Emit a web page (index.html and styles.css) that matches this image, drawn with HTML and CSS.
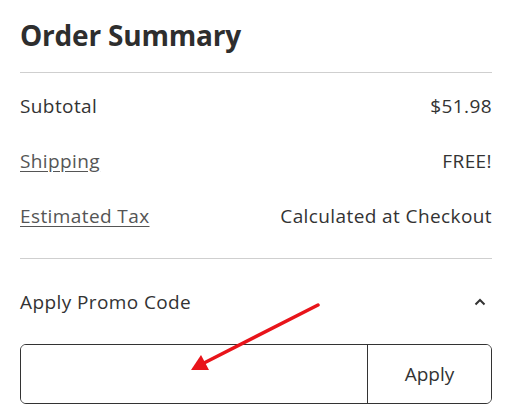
FILE: index.html
```html
<!DOCTYPE html>
<html lang="en">
<head>
    <meta charset="UTF-8">
    <meta name="viewport" content="width=device-width, initial-scale=1.0">
    <title>Order Summary</title>
    <link rel="stylesheet" href="styles.css">
</head>
<body>
  <div class="summary">
    <h1 class="title">Order Summary</h1>

    <div class="rows">
      <div class="row">
        <span>Subtotal</span>
        <span>$51.98</span>
      </div>
      <div class="row">
        <a href="#" class="link">Shipping</a>
        <span>FREE!</span>
      </div>
      <div class="row">
        <a href="#" class="link">Estimated Tax</a>
        <span>Calculated at Checkout</span>
      </div>
    </div>

    <div class="promo">
      <div class="promo-head">
        <span>Apply Promo Code</span>
        <svg class="chevron" width="12" height="8" viewBox="0 0 12 8">
          <path d="M1.5 6.5 L6 2 L10.5 6.5" fill="none" stroke="#333" stroke-width="2"/>
        </svg>
      </div>
      <div class="promo-form">
        <input type="text" class="promo-input" aria-label="Promo code">
        <button class="promo-btn">Apply</button>
      </div>
    </div>
  </div>

  <svg class="arrow" width="516" height="415" viewBox="0 0 516 415">
    <line x1="318" y1="305" x2="204" y2="363" stroke="#e8141a" stroke-width="3.5" stroke-linecap="round"/>
    <polygon points="191,370 201,355 209,370" fill="#e8141a"/>
  </svg>
</body>
</html>
```

FILE: styles.css
```css
body {
margin: 0;
font-family: 'Open Sans', 'Liberation Sans', sans-serif;
color: #333;
background: #fff;
}

.summary {
width: 472px;
padding-left: 20px;
}

.title {
margin: 0;
padding: 17px 0 19px;
font-size: 28px;
line-height: 36px;
font-weight: 700;
letter-spacing: -0.2px;
color: #2e2e2e;
border-bottom: 1px solid #cfcfcf;
}

.rows {
display: flex;
flex-direction: column;
gap: 31px;
padding: 21px 0 30px;
border-bottom: 1px solid #cfcfcf;
}

.row {
display: flex;
justify-content: space-between;
font-size: 19px;
line-height: 24px;
letter-spacing: 0.4px;
}

.link {
color: #555;
text-decoration: underline;
text-underline-offset: 3px;
}

.promo-head {
display: flex;
justify-content: space-between;
align-items: center;
padding-top: 31px;
font-size: 19px;
line-height: 24px;
letter-spacing: 0.4px;
}

.chevron {
margin-right: 6px;
}

.promo-form {
display: flex;
margin-top: 30px;
height: 60px;
border: 1px solid #333;
border-radius: 6px;
box-sizing: border-box;
overflow: hidden;
}

.promo-input {
flex: 1;
border: none;
outline: none;
padding: 0 14px;
font-size: 18px;
font-family: inherit;
}

.promo-btn {
width: 124px;
border: none;
border-left: 1px solid #333;
background: #fff;
font-family: inherit;
font-size: 19px;
color: #333;
}

.arrow {
position: absolute;
top: 0;
left: 0;
pointer-events: none;
}
```
